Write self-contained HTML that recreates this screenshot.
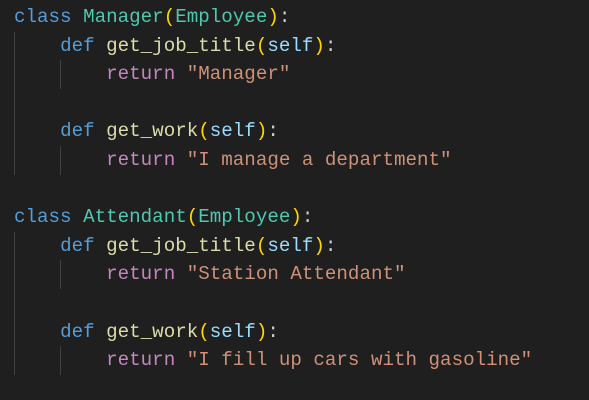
<!DOCTYPE html>
<html><head><style>
html,body{margin:0;padding:0;background:#1f1f1f;width:589px;height:400px;overflow:hidden}
pre{margin:0;position:absolute;left:14px;top:3px;font-family:"Liberation Mono",monospace;font-size:19.2px;line-height:28.6px;color:#cccccc}
.k{color:#569cd6}.c{color:#4ec9b0}.f{color:#dcdcaa}.s{color:#9cdcfe}.r{color:#c586c0}.q{color:#ce9178}.p{color:#ffd700}
.g{position:absolute;width:1px;background:#404040}
</style></head><body>
<div class="g" style="left:14px;top:32px;height:143px"></div>
<div class="g" style="left:60px;top:60px;height:29px"></div>
<div class="g" style="left:60px;top:146px;height:29px"></div>
<div class="g" style="left:14px;top:232px;height:143px"></div>
<div class="g" style="left:60px;top:260px;height:29px"></div>
<div class="g" style="left:60px;top:346px;height:29px"></div>
<pre><span class="k">class</span> <span class="c">Manager</span><span class="p">(</span><span class="c">Employee</span><span class="p">)</span>:
    <span class="k">def</span> <span class="f">get_job_title</span><span class="p">(</span><span class="s">self</span><span class="p">)</span>:
        <span class="r">return</span> <span class="q">"Manager"</span>

    <span class="k">def</span> <span class="f">get_work</span><span class="p">(</span><span class="s">self</span><span class="p">)</span>:
        <span class="r">return</span> <span class="q">"I manage a department"</span>

<span class="k">class</span> <span class="c">Attendant</span><span class="p">(</span><span class="c">Employee</span><span class="p">)</span>:
    <span class="k">def</span> <span class="f">get_job_title</span><span class="p">(</span><span class="s">self</span><span class="p">)</span>:
        <span class="r">return</span> <span class="q">"Station Attendant"</span>

    <span class="k">def</span> <span class="f">get_work</span><span class="p">(</span><span class="s">self</span><span class="p">)</span>:
        <span class="r">return</span> <span class="q">"I fill up cars with gasoline"</span>
</pre>
</body></html>
